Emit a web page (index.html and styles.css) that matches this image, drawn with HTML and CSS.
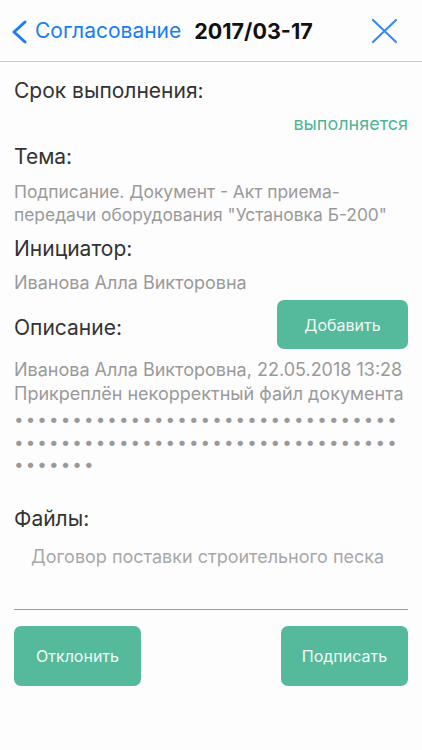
FILE: index.html
```html
<!DOCTYPE html>
<html lang="ru">
  <head>
    <meta charset="UTF-8" />
    <meta name="viewport" content="width=device-width, initial-scale=1.0" />
    <title>Согласование</title>
    <link rel="stylesheet" href="styles.css">
  </head>
  <body>
    <header class="nav">
      <svg class="back-icon" width="17" height="24" viewBox="0 0 17 24">
        <path d="M14 2 L3 12 L14 22" fill="none" stroke="#1a7df0" stroke-width="3" stroke-linecap="round" stroke-linejoin="round" />
      </svg>
      <span class="back-text">Согласование</span>
      <span class="nav-title">2017/03-17</span>
      <svg class="close-icon" width="27" height="26" viewBox="0 0 27 26">
        <path d="M2 2 L25 24 M25 2 L2 24" fill="none" stroke="#3b8af2" stroke-width="2.2" stroke-linecap="round" />
      </svg>
    </header>

    <main class="content">
      <div class="label">Срок выполнения:</div>
      <div class="status">выполняется</div>

      <div class="label">Тема:</div>
      <div class="value subject">Подписание. Документ - Акт приема-передачи оборудования "Установка Б-200"</div>

      <div class="label">Инициатор:</div>
      <div class="value initiator">Иванова Алла Викторовна</div>

      <div class="desc-row">
        <div class="label desc-label">Описание:</div>
        <button class="btn btn-add">Добавить</button>
      </div>
      <div class="comment">
        Иванова Алла Викторовна, 22.05.2018 13:28<br />
        Прикреплён некорректный файл документа
      </div>
      <div class="dots">•••••••••••••••••••••••••••••••••••••••••••••••••••••••••••••••••••••••••</div>

      <div class="label files-label">Файлы:</div>
      <div class="file">Договор поставки строительного песка</div>

      <div class="actions">
        <button class="btn btn-action">Отклонить</button>
        <button class="btn btn-action">Подписать</button>
      </div>
    </main>
  </body>
</html>
```

FILE: styles.css
```css
body {
  margin: 0;
  font-family: "Inter", "Noto Sans", sans-serif;
  background-color: #fdfdfd;
  color: #333;
}

.nav {
  display: flex;
  align-items: center;
  height: 61px;
  border-bottom: 1px solid #c9c9c9;
}

.back-icon {
  margin-left: 11px;
  margin-top: 3px;
}

.back-text {
  margin-left: 7px;
  font-size: 21px;
  color: #1a7df0;
}

.nav-title {
  margin-left: 13px;
  font-size: 21.5px;
  font-weight: 700;
  color: #111;
}

.close-icon {
  margin-left: auto;
  margin-right: 24px;
}

.content {
  padding: 14px 14px 0;
}

.label {
  font-size: 21px;
  line-height: 30px;
  color: #333;
}

.status {
  text-align: right;
  font-size: 18px;
  line-height: 26px;
  margin: 5px 0 5px;
  color: #4fb596;
}

.value {
  font-size: 18px;
  line-height: 23px;
  color: #9a9a9a;
  margin: 7px 0 8px;
}

.subject {
  font-size: 17.4px;
  margin-top: 8px;
}

.initiator {
  margin-bottom: 6px;
}

.desc-row {
  display: flex;
  justify-content: space-between;
  align-items: flex-start;
}

.desc-label {
  margin-top: 13px;
}

.btn {
  font-family: inherit;
  border: none;
  border-radius: 7px;
  background-color: #55b99b;
  color: #f2fbf8;
  font-size: 16px;
  cursor: pointer;
}

.btn-add {
  width: 131px;
  height: 49px;
}

.comment {
  margin-top: 9px;
  font-size: 18px;
  line-height: 24px;
  color: #9a9a9a;
}

.dots {
  margin-top: 2px;
  font-size: 17px;
  line-height: 22.5px;
  letter-spacing: 2.1px;
  color: #999;
  word-break: break-all;
}

.files-label {
  margin-top: 28px;
}

.file {
  margin-top: 11px;
  padding: 0 0 40px 17px;
  font-size: 18px;
  line-height: 24px;
  color: #a8a8a8;
  border-bottom: 1px solid #9a9a9a;
}

.actions {
  display: flex;
  justify-content: space-between;
  margin-top: 16px;
}

.btn-action {
  width: 127px;
  height: 60px;
}
```
